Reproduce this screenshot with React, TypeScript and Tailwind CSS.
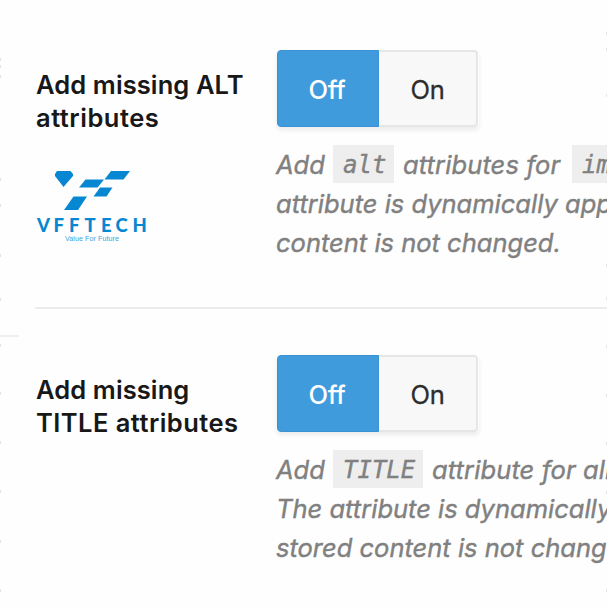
import React, { ReactNode } from 'react';

const Toggle: React.FC = () => (
  <div className="flex h-[77px] w-[202px] rounded-[4px] shadow-[0_3px_5px_rgba(0,0,0,0.08)]">
    <button
      type="button"
      className="w-[102px] rounded-l-[4px] border border-[#3a92d2] bg-[#409bdd] pt-[4px] pr-[2px] text-[25.5px] font-medium tracking-[-0.3px] text-white"
    >
      Off
    </button>
    <button
      type="button"
      className="w-[99px] rounded-r-[4px] border-2 border-l-0 border-[#e6e6e6] bg-[#f8f8f8] pt-[4px] text-[25.5px] tracking-[-0.3px] text-[#2d2d2d] [-webkit-text-stroke:0.3px]"
    >
      On
    </button>
  </div>
);

const Code: React.FC<{ children: ReactNode; className?: string }> = ({ children, className = '' }) => (
  <code
    className={`-mt-[3px] block h-[38px] shrink-0 bg-[#eeeeee] font-['DejaVu_Sans_Mono',monospace] text-[24px] leading-[40px] ${className}`}
  >
    {children}
  </code>
);

const Logo: React.FC = () => (
  <svg width="114" height="74" viewBox="0 0 114 74" aria-label="VFFTECH" className="block">
    <g fill="#0787d1">
      <path d="M21 2h13.500l2.500 3v2l-9.500 11L19 7V5z" />
      <path d="M75 2h19l-6.500 8.500H68.500z" />
      <path d="M49.500 10.500h18.500l-6.500 8H43z" />
      <path d="M64 18.500h12.500l-6 9H57.500z" />
      <path d="M37.500 27.500h13.500l-9 13.500H28z" />
    </g>
    <g fill="#0787d1" fontFamily="Lato, sans-serif" fontSize="18.500" fontWeight="900">
      <text x="1" y="63">V</text>
      <text x="17.500" y="63">F</text>
      <text x="33" y="63">F</text>
      <text x="48.500" y="63">T</text>
      <text x="65" y="63">E</text>
      <text x="79.500" y="63">C</text>
      <text x="96.500" y="63">H</text>
    </g>
    <text x="29" y="72" fill="#3fa2dd" fontFamily="Liberation Sans, sans-serif" fontSize="7.200" textLength="54">
      Value For Future
    </text>
  </svg>
);

interface SettingRowProps {
  title: ReactNode;
  children: ReactNode;
  logo?: boolean;
}

const SettingRow: React.FC<SettingRowProps> = ({ title, children, logo = false }) => (
  <section className="ml-[36px] grid grid-cols-[241px_1fr]">
    <div className="pt-[18px]">
      <h2 className="text-[25.500px] leading-[33px] font-semibold tracking-[0.1px] whitespace-nowrap text-[#181818] [font-variant-ligatures:none]">
        {title}
      </h2>
      {logo && (
        <div className="pt-[35px]">
          <Logo />
        </div>
      )}
    </div>
    <div className="min-w-0">
      <Toggle />
      <div className="-ml-px pt-[19px] text-[25.500px] leading-[38.750px] whitespace-nowrap text-[#808080] italic [-webkit-text-stroke:0.4px] [font-variant-ligatures:none]">
        {children}
      </div>
    </div>
  </section>
);

const leftMarks = [58, 65, 75, 178, 204, 254, 298, 344, 392, 441, 490, 540, 589];
const rightMarks = [32, 48, 94, 264, 297, 345, 394, 442, 491, 589];

const EdgeMarks: React.FC<{ marks: number[]; className: string }> = ({ marks, className }) => (
  <div className={`absolute top-0 h-full w-px ${className}`}>
    {marks.map((y) => (
      <i key={y} className="absolute h-[3px] w-px bg-[#e4e4e4]" style={{ top: y }} />
    ))}
  </div>
);

export default function App() {
  return (
    <main className="relative h-[607px] w-[607px] overflow-hidden bg-[#fefefe] pt-[50px] font-['Inter',sans-serif]">
      <div className="h-[257px]">
        <SettingRow logo title={<>Add missing ALT<br /><span className="tracking-[0.5px]">attributes</span></>}>
          <div className="flex h-[39px] items-center">
            <span className="w-[57px] shrink-0">Add</span>
            <Code className="w-[61px] pl-[10px]">alt</Code>
            <span className="ml-[9px] w-[169px] shrink-0 tracking-[0.1px]">attributes for</span>
            <Code className="w-[66px] pl-[10px]">im</Code>
          </div>
          <div>attribute is dynamically app</div>
          <div>content is not changed.</div>
        </SettingRow>
      </div>
      <hr className="ml-[35px] border-t-2 border-[#ececec]" />
      <div className="flex h-[46px] items-center pt-[8px]">
        <div className="h-[2px] w-[19px] bg-[#f0f0f0]" />
      </div>
      <SettingRow title={<>Add missing<br /><span className="tracking-[0.45px]">TITLE attributes</span></>}>
        <div className="flex h-[39px] items-center">
          <span className="w-[57px] shrink-0">Add</span>
          <Code className="w-[90px] pl-[10px]">TITLE</Code>
          <span className="ml-[9px] tracking-[0.1px]">attribute for all</span>
        </div>
        <div>The attribute is dynamically</div>
        <div>stored content is not chang</div>
      </SettingRow>
      <EdgeMarks marks={leftMarks} className="left-0" />
      <EdgeMarks marks={rightMarks} className="right-0" />
    </main>
  );
}
